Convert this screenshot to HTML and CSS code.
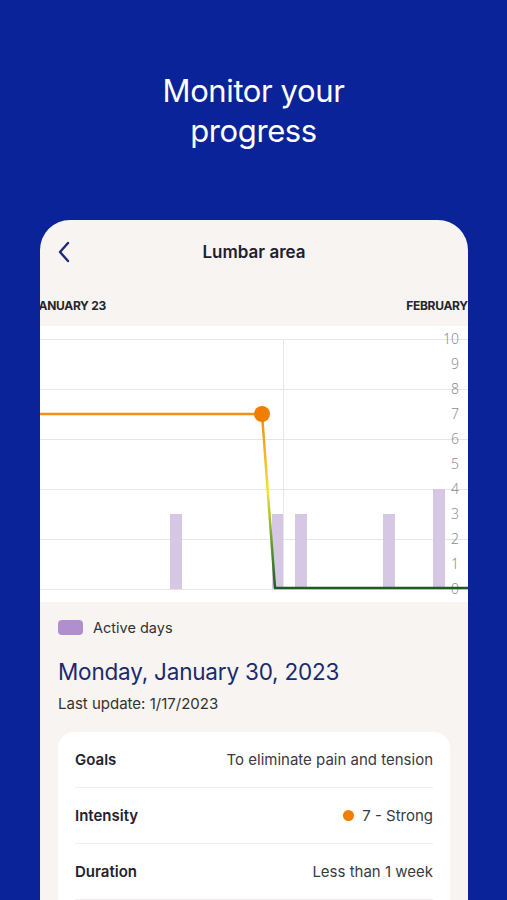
FILE: index.html
```html
<!DOCTYPE html>
<html>
<head>
    <title>Monitor your progress</title>
    <link rel="stylesheet" href="styles.css">
</head>
<body>
    <h1 class="headline">Monitor your<br>progress</h1>

    <div class="phone">
        <div class="topbar">
            <svg class="back" width="16" height="24" viewBox="0 0 16 24">
                <path d="M12 3 L4 12 L12 21" fill="none" stroke="#1d2c78" stroke-width="2.4" stroke-linecap="round" stroke-linejoin="round"/>
            </svg>
            <div class="title">Lumbar area</div>
        </div>

        <div class="months">
            <span class="month first">JANUARY 23</span>
            <span class="month last">FEBRUARY 23</span>
        </div>

        <svg class="chart" width="428" height="276" viewBox="0 0 428 276">
            <defs>
                <linearGradient id="drop" x1="0" y1="88" x2="0" y2="262" gradientUnits="userSpaceOnUse">
                    <stop offset="0" stop-color="#f08a10"/>
                    <stop offset="0.45" stop-color="#f4e23a"/>
                    <stop offset="0.75" stop-color="#5c9a30"/>
                    <stop offset="1" stop-color="#1f5a22"/>
                </linearGradient>
            </defs>
            <rect width="428" height="276" fill="#fff"/>
            <g stroke="#e6e6e6" stroke-width="1">
                <line x1="0" y1="13.5" x2="428" y2="13.5"/>
                <line x1="0" y1="63.5" x2="428" y2="63.5"/>
                <line x1="0" y1="113.5" x2="428" y2="113.5"/>
                <line x1="0" y1="163.5" x2="428" y2="163.5"/>
                <line x1="0" y1="213.5" x2="428" y2="213.5"/>
                <line x1="0" y1="263.5" x2="428" y2="263.5"/>
                <line x1="243.5" y1="13" x2="243.5" y2="263"/>
            </g>
            <g fill="#d6c8e5">
                <rect x="130" y="188" width="12" height="75"/>
                <rect x="232" y="188" width="11" height="75"/>
                <rect x="255" y="188" width="12" height="75"/>
                <rect x="343" y="188" width="12" height="75"/>
                <rect x="393" y="163" width="12" height="100"/>
            </g>
            <g class="axis" fill="#8f8f8f" text-anchor="end">
                <text x="419" y="18">10</text>
                <text x="419" y="43">9</text>
                <text x="419" y="68">8</text>
                <text x="419" y="93">7</text>
                <text x="419" y="118">6</text>
                <text x="419" y="143">5</text>
                <text x="419" y="168">4</text>
                <text x="419" y="193">3</text>
                <text x="419" y="218">2</text>
                <text x="419" y="243">1</text>
                <text x="419" y="268">0</text>
            </g>
            <line x1="0" y1="88" x2="222" y2="88" stroke="#f0901a" stroke-width="2.5"/>
            <path d="M222 88 L235 262" fill="none" stroke="url(#drop)" stroke-width="2.5"/>
            <line x1="234" y1="262" x2="428" y2="262" stroke="#1f5a22" stroke-width="2.5"/>
            <circle cx="222" cy="88" r="8" fill="#f07e00"/>
        </svg>

        <div class="details">
            <div class="legend">
                <span class="swatch"></span>
                <span>Active days</span>
            </div>
            <h2 class="day">Monday, January 30, 2023</h2>
            <div class="updated">Last update: 1/17/2023</div>

            <div class="info">
                <div class="row">
                    <span class="label">Goals</span>
                    <span class="value">To eliminate pain and tension</span>
                </div>
                <div class="row">
                    <span class="label">Intensity</span>
                    <span class="value"><span class="dot"></span>7 - Strong</span>
                </div>
                <div class="row">
                    <span class="label">Duration</span>
                    <span class="value">Less than 1 week</span>
                </div>
            </div>
        </div>
    </div>
</body>
</html>
```

FILE: styles.css
```css
body {
    margin: 0;
    background-color: #0b2398;
    font-family: Inter, "Noto Sans", sans-serif;
    height: 900px;
    overflow: hidden;
}
.headline {
    margin: 0;
    padding-top: 71px;
    color: #fff;
    text-align: center;
    font-weight: 400;
    font-size: 31px;
    line-height: 40px;
    letter-spacing: -0.4px;
}
.phone {
    margin: 69px 0 0 40px;
    width: 428px;
    height: 760px;
    background-color: #f7f4f2;
    border-radius: 30px 30px 0 0;
    overflow: hidden;
}
.topbar {
    height: 64px;
    display: flex;
    align-items: center;
    justify-content: center;
    position: relative;
}
.back {
    position: absolute;
    left: 16px;
    top: 20px;
}
.title {
    font-size: 17px;
    font-weight: 600;
    color: #1f2030;
}
.months {
    height: 42px;
    display: flex;
    align-items: center;
    justify-content: space-between;
    overflow: hidden;
    white-space: nowrap;
}
.month {
    font-size: 12px;
    font-weight: 700;
    color: #26262e;
    letter-spacing: -0.3px;
}
.month.first {
    margin-left: -8px;
}
.month.last {
    margin-right: -17px;
}
.chart {
    display: block;
}
.axis {
    font-size: 14px;
    font-family: "Noto Sans", sans-serif;
    font-weight: 300;
}
.details {
    padding: 17px 18px 0;
}
.legend {
    display: flex;
    align-items: center;
    gap: 10px;
    font-size: 14.5px;
    color: #333;
    height: 16px;
}
.swatch {
    width: 25px;
    height: 15px;
    border-radius: 4px;
    background-color: #b08fd1;
}
.day {
    margin: 22px 0 0;
    font-size: 22.5px;
    font-weight: 400;
    color: #1b2a6e;
    line-height: 30px;
    letter-spacing: -0.2px;
}
.updated {
    margin-top: 8px;
    font-size: 15px;
    line-height: 18px;
    color: #333;
}
.info {
    margin-top: 19px;
    background-color: #fff;
    border-radius: 16px;
    padding: 0 17px 60px;
}
.row {
    height: 55px;
    display: flex;
    align-items: center;
    justify-content: space-between;
    border-bottom: 1px solid #efeded;
    font-size: 15px;
}
.label {
    font-weight: 600;
    color: #22222e;
}
.value {
    color: #3a3a44;
    display: flex;
    align-items: center;
}
.dot {
    width: 11px;
    height: 11px;
    border-radius: 50%;
    background-color: #f07e00;
    margin-right: 8px;
}
```
